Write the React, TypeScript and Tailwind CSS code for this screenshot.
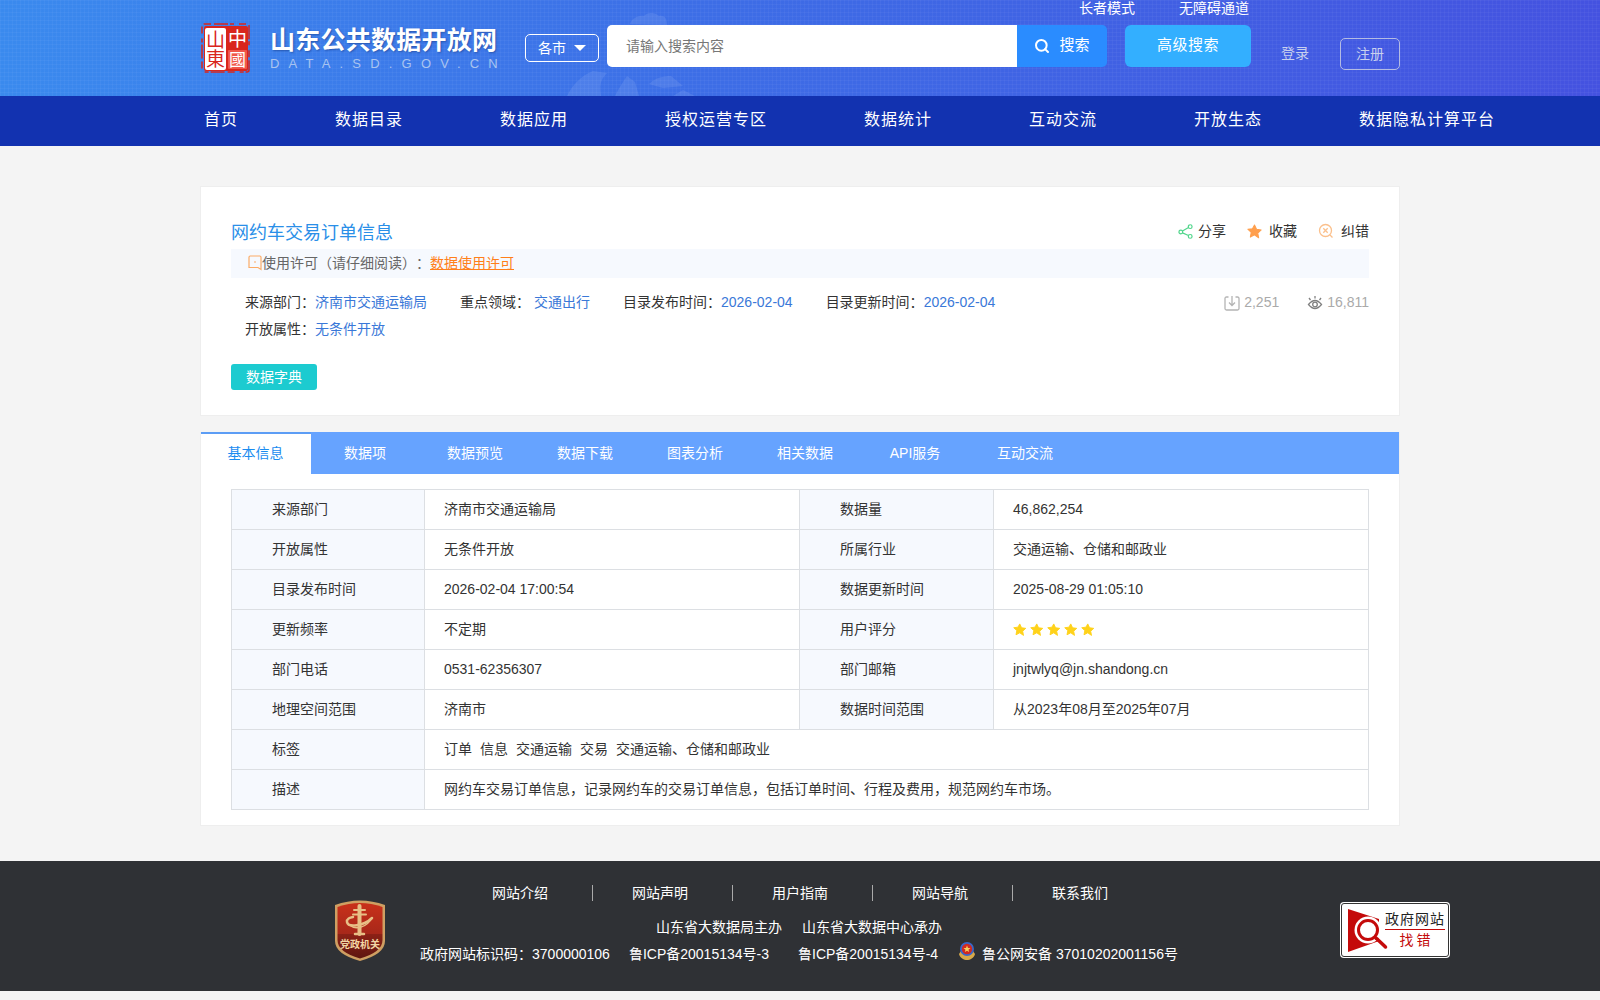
/**
 * 山东公共数据开放网 - dataset detail page
 */
import { Search } from 'lucide-react';

const NAV_ITEMS = ['首页', '数据目录', '数据应用', '授权运营专区', '数据统计', '互动交流', '开放生态', '数据隐私计算平台'];
const TABS = ['基本信息', '数据项', '数据预览', '数据下载', '图表分析', '相关数据', 'API服务', '互动交流'];
const FOOTER_LINKS = ['网站介绍', '网站声明', '用户指南', '网站导航', '联系我们'];

const ROWS: [string, string, string, string][] = [
  ['来源部门', '济南市交通运输局', '数据量', '46,862,254'],
  ['开放属性', '无条件开放', '所属行业', '交通运输、仓储和邮政业'],
  ['目录发布时间', '2026-02-04 17:00:54', '数据更新时间', '2025-08-29 01:05:10'],
  ['更新频率', '不定期', '用户评分', ''],
  ['部门电话', '0531-62356307', '部门邮箱', 'jnjtwlyq@jn.shandong.cn'],
  ['地理空间范围', '济南市', '数据时间范围', '从2023年08月至2025年07月'],
];

function Star({ className }: { className: string }) {
  return (
    <svg viewBox="1 1 22 22" className={className} fill="currentColor" stroke="currentColor" strokeWidth="1.5" strokeLinejoin="round">
      <path d="M12 2.500l3 6.300 6.800.9-5 4.700 1.300 6.800L12 17l-6.100 3.200 1.300-6.800-5-4.700 6.800-.9z" />
    </svg>
  );
}

function Seal() {
  return (
    <svg viewBox="0 0 52 52" className="w-[52px] h-[52px] shrink-0">
      <rect x="2" y="2" width="47" height="48" rx="2" fill="none" stroke="#d9261c" strokeWidth="1.500" strokeDasharray="7 3 14 2 4 5" />
      <rect x="4" y="4" width="44" height="45" rx="2" fill="#d9261c" />
      <rect x="5" y="6" width="21" height="42" rx="2" fill="#fff" />
      <rect x="28" y="28" width="19" height="19" rx="1" fill="#f0564a" />
      <text x="15.500" y="25" fontSize="19" textAnchor="middle" fill="#d9261c">山</text>
      <text x="15.500" y="44" fontSize="19" textAnchor="middle" fill="#d9261c">東</text>
      <text x="37.500" y="24" fontSize="19" textAnchor="middle" fill="#fff">中</text>
      <text x="37.500" y="44" fontSize="17" textAnchor="middle" fill="#fff">國</text>
    </svg>
  );
}

function PartyBadge() {
  return (
    <svg viewBox="0 0 52 63" className="w-[52px] h-[63px] shrink-0">
      <defs>
        <linearGradient id="shield" x1="0" y1="0" x2="0" y2="1">
          <stop offset="0" stopColor="#c9301a" />
          <stop offset="0.55" stopColor="#a8281a" />
          <stop offset="0.56" stopColor="#8c2116" />
          <stop offset="1" stopColor="#5e1610" />
        </linearGradient>
      </defs>
      <path d="M1 6Q26-3 51 6V42Q51 55 26 62Q1 55 1 42Z" fill="#cf9f62" />
      <path d="M3.500 8Q26 0 48.500 8V41Q48.500 53 26 59.500Q3.500 53 3.500 41Z" fill="url(#shield)" />
      <g fill="none" stroke="#e8bf86" strokeLinecap="round">
        <path d="M25.500 7V35" strokeWidth="4" />
        <path d="M20 11H31M19 15.500H32" strokeWidth="2" />
        <path d="M21 35H30" strokeWidth="2.500" />
        <path d="M38 19C30 27 14 29 13 23C12.500 20 16 18.500 19 18" strokeWidth="2.500" />
        <path d="M17 27C22 31 33 28 38 19" strokeWidth="1.500" />
      </g>
      <text x="26" y="49" fontSize="10" fontWeight="700" textAnchor="middle" fill="#f3d6a4">党政机关</text>
    </svg>
  );
}

function PoliceBadge() {
  return (
    <svg viewBox="0 0 20 20" className="w-[20px] h-[20px] shrink-0 -mt-[6px]">
      <path d="M2 13c1 4 5 6 8 6s7-2 8-6l-2-3H4z" fill="#d8a948" />
      <circle cx="10" cy="8" r="7" fill="#3a66c8" />
      <circle cx="10" cy="8" r="5.200" fill="#d02a20" />
      <path d="M10 4.500l1 2.400 2.500.2-2 1.600.7 2.400-2.200-1.400-2.200 1.400.7-2.400-2-1.600 2.500-.2z" fill="#f4d060" />
    </svg>
  );
}

function ErrorBadge() {
  return (
    <div className="w-[110px] h-[56px] bg-white rounded-[4px] p-[1px]">
      <div className="h-full bg-white rounded-[3px] border border-[#333] flex items-center pl-[5px]">
        <svg viewBox="0 0 42 46" className="w-[42px] h-[46px] shrink-0">
          <path d="M1 2L32 12V34L1 45Z" fill="#c40a0a" />
          <circle cx="21" cy="23" r="13.500" fill="#fff" />
          <circle cx="21" cy="23" r="9.500" fill="#fff" stroke="#c40a0a" strokeWidth="3" />
          <path d="M29 31l9.500 9" stroke="#c40a0a" strokeWidth="3.500" strokeLinecap="round" />
        </svg>
        <div className="flex flex-col items-center w-[60px] -ml-[4px] whitespace-nowrap">
          <span className="text-[14px] leading-[19px] text-[#222] tracking-[1px]">政府网站</span>
          <span className="w-full h-[1px] bg-[#c40a0a]" />
          <span className="text-[14px] leading-[21px] text-[#c40a0a] tracking-[3px] pl-[3px]">找错</span>
        </div>
      </div>
    </div>
  );
}

function Header() {
  return (
    <header className="h-[96px] bg-[linear-gradient(rgba(255,255,255,0.035)_1px,transparent_1px),linear-gradient(90deg,rgba(255,255,255,0.035)_1px,transparent_1px),linear-gradient(90deg,#3a8aee,#3d6de6_45%,#4452e0)] bg-[size:4px_4px,4px_4px,100%_100%] relative overflow-hidden">
      {/* faint mountain watermark around the search box */}
      <svg viewBox="0 0 150 96" className="absolute left-[565px] top-0 w-[150px] h-[96px] opacity-[0.1]" fill="#e4edff">
        <path d="M65 24c2-6 9-9 14-8 3-4 11-4 15 0 5-1 8 2 8 9zM2 96c6-12 14-20 26-25l14 2c-6 6-8 12-6 23zM50 96c4-8 8-14 12-20l8 6 4 14zM84 84c6-6 14-8 22-8l12 10-20 2zM108 96l10-6 12 6z" />
      </svg>
      <div className="relative w-[1200px] mx-auto flex h-full">
        <div className="absolute right-[151px] top-0 flex gap-[44px] text-sm leading-[16px] text-white">
          <span>长者模式</span>
          <span>无障碍通道</span>
        </div>

        <div className="flex items-center self-stretch">
          <Seal />
          <div className="ml-[18px] w-[235px] self-start pt-[25px]">
            <div className="text-[25px] leading-[30px] tracking-[0.250px] font-bold text-white whitespace-nowrap [text-shadow:1px_1px_2px_rgba(20,50,120,0.5)]">山东公共数据开放网</div>
            <div className="text-[13px] leading-[20px] -mt-[1px] tracking-[9.200px] text-[#a9c4f0] whitespace-nowrap">DATA.SD.GOV.CN</div>
          </div>
        </div>

        <div className="flex items-start pt-[25px] ml-[20px]">
          <div className="mt-[9px] w-[74px] h-[28px] border border-white rounded-[5px] flex items-center justify-center gap-[8px] text-sm text-white">
            各市
            <span className="w-0 h-0 border-x-[6px] border-x-transparent border-t-[6px] border-t-white" />
          </div>
          <div className="ml-[8px] w-[410px] h-[42px] bg-white rounded-l-[5px] pl-[19px] flex items-center text-sm text-[#777]">
            请输入搜索内容
          </div>
          <div className="w-[90px] h-[42px] bg-[#2a8cff] rounded-r-[5px] pb-[1px] flex items-center justify-center gap-[9px] text-[15px] text-white">
            <Search size={16} strokeWidth={3} />
            搜索
          </div>
          <div className="ml-[18px] w-[126px] h-[42px] bg-[#33afff] rounded-[6px] pb-[2px] flex items-center justify-center text-[15px] tracking-[0.500px] text-white">
            高级搜索
          </div>
          <div className="ml-[30px] mt-[18px] text-sm leading-[20px] text-[#c8d0ee]">登录</div>
          <div className="ml-[31px] mt-[13px] w-[60px] h-[32px] border border-[#b4bce4] rounded-[5px] flex items-center justify-center text-sm text-[#c8d0ee]">
            注册
          </div>
        </div>
      </div>
    </header>
  );
}

function NavBar() {
  return (
    <nav className="h-[50px] bg-[#1232b0]">
      <div className="w-[1200px] mx-auto flex items-center h-full gap-[97px] pl-[4px] pb-[2px] text-[16px] tracking-[1px] text-white whitespace-nowrap">
        {NAV_ITEMS.map((item) => (
          <span key={item}>{item}</span>
        ))}
      </div>
    </nav>
  );
}

function SummaryCard() {
  return (
    <section className="bg-white border border-[#eeeeee] px-[30px] pt-[34px] pb-[25px]">
      <div className="flex justify-between items-center h-[22px]">
        <h1 className="text-[18px] pt-[2px] text-[#2a8fe8]">网约车交易订单信息</h1>
        <div className="flex items-center pb-[2px] text-sm text-[#333]">
          <svg viewBox="0 0 16 16" className="w-[15px] h-[15px] mr-[5px]" fill="none" stroke="#52d68c" strokeWidth="1.300">
            <circle cx="3" cy="8.500" r="2" />
            <circle cx="13" cy="2.800" r="2" />
            <circle cx="13" cy="13.200" r="2" />
            <path d="M4.800 7.500l6.400-3.700M4.800 9.500l6.400 2.800" />
          </svg>
          <span>分享</span>
          <Star className="w-[15px] h-[15px] ml-[21px] mr-[7px] text-[#ff9f4d]" />
          <span>收藏</span>
          <svg viewBox="0 0 16 16" className="w-[16px] h-[16px] ml-[21px] mr-[7px]" fill="none" stroke="#fbc08c" strokeWidth="1.300">
            <circle cx="7.500" cy="7.500" r="6" />
            <path d="M5.300 5.300l4.400 4.400M9.700 5.300l-4.400 4.400M12 12l2.500 2.500" />
          </svg>
          <span>纠错</span>
        </div>
      </div>

      <div className="mt-[6px] h-[29px] bg-[#f6f9fe] flex items-center pl-[17px] pb-[1px] text-sm text-[#666] [text-spacing-trim:space-all]">
        <svg viewBox="0 0 14 16" className="w-[14px] h-[16px]" fill="none" stroke="#fbab66" strokeWidth="1.200">
          <path d="M1 2.200q0-1.200 1.200-1.200h9.600q1.200 0 1.200 1.200V14.500l-3-2H1z" />
          <path d="M6 7h2" />
        </svg>
        <span>使用许可（请仔细阅读）：</span>
        <span className="text-[#ff7f1a] underline">数据使用许可</span>
      </div>

      <div className="mt-[10px] flex justify-between items-center h-[28px] pl-[14px] text-sm text-[#333]">
        <div className="flex gap-[33px]">
          <span>来源部门：<span className="text-[#3a78d8]">济南市交通运输局</span></span>
          <span>重点领域：<span className="ml-[4px] text-[#3a78d8]">交通出行</span></span>
          <span>目录发布时间：<span className="text-[#3a78d8]">2026-02-04</span></span>
          <span>目录更新时间：<span className="text-[#3a78d8]">2026-02-04</span></span>
        </div>
        <div className="flex items-center text-[#aaaaaa]">
          <svg viewBox="0 0 16 16" className="w-[16px] h-[16px] mr-[4px] mt-[2px]" fill="none" stroke="#b4b4b4" strokeWidth="1.300">
            <path d="M4.500 2H2.500Q1 2 1 3.500v10Q1 15 2.500 15h11q1.500 0 1.500-1.500v-10Q15 2 13.500 2H11.500" />
            <path d="M8 1v9M5 7.500l3 3 3-3" />
          </svg>
          <span>2,251</span>
          <svg viewBox="0 0 16 16" className="w-[16px] h-[16px] ml-[28px] mr-[4px] mt-[2px]" fill="none" stroke="#808080" strokeWidth="1.300">
            <path d="M1.500 9.500Q8 1.500 14.500 9.500Q8 17.500 1.500 9.500Z" />
            <circle cx="8" cy="9.500" r="2.300" />
            <path d="M3.500 5L2 3M8 3.500V1M12.500 5L14 3" />
          </svg>
          <span>16,811</span>
        </div>
      </div>

      <div className="flex items-center h-[26px] pl-[14px] text-sm text-[#333]">
        <span>开放属性：<span className="text-[#3a78d8]">无条件开放</span></span>
      </div>

      <button className="mt-[22px] block w-[86px] h-[26px] bg-[#1ccbd0] rounded-[3px] text-sm text-white">数据字典</button>
    </section>
  );
}

function DetailPanel() {
  const labelCell = 'border border-[#dcdfe3] bg-[#f6f9fe] pl-[40px] pb-[1px] font-normal text-left';
  const valueCell = 'border border-[#dcdfe3] pl-[19px] pb-[1px]';

  return (
    <section className="mt-[16px] bg-white border-x border-b border-[#eeeeee] pb-[15px]">
      <div className="flex h-[42px] bg-[#66a3ff] text-sm text-white">
        {TABS.map((tab, i) =>
          i === 0 ? (
            <span key={tab} className="w-[110px] flex items-center justify-center bg-white border-t-2 border-[#5c9df5] pb-[2px] pr-[1px] text-[#1a8cf0]">{tab}</span>
          ) : (
            <span key={tab} className="w-[110px] flex items-center justify-center pr-[2px]">{tab}</span>
          ),
        )}
      </div>

      <div className="px-[30px] pt-[15px]">
        <table className="w-[1137px] table-fixed border-collapse text-sm text-[#333]">
          <colgroup>
            <col className="w-[193px]" />
            <col className="w-[375px]" />
            <col className="w-[194px]" />
            <col className="w-[375px]" />
          </colgroup>
          <tbody>
            {ROWS.map(([l1, v1, l2, v2]) => (
              <tr key={l1} className="h-[40px]">
                <th className={labelCell}>{l1}</th>
                <td className={valueCell}>{v1}</td>
                <th className={labelCell}>{l2}</th>
                <td className={valueCell}>
                  {v2 || (
                    <div className="flex gap-[3.500px] mt-[1px] text-[#ffd21a]">
                      {[0, 1, 2, 3, 4].map((n) => (
                        <Star key={n} className="w-[13.500px] h-[13.500px]" />
                      ))}
                    </div>
                  )}
                </td>
              </tr>
            ))}
            <tr className="h-[40px]">
              <th className={labelCell}>标签</th>
              <td className={valueCell} colSpan={3}>
                <div className="flex gap-[8px]">
                  <span>订单</span>
                  <span>信息</span>
                  <span>交通运输</span>
                  <span>交易</span>
                  <span>交通运输、仓储和邮政业</span>
                </div>
              </td>
            </tr>
            <tr className="h-[40px]">
              <th className={labelCell}>描述</th>
              <td className={valueCell} colSpan={3}>网约车交易订单信息，记录网约车的交易订单信息，包括订单时间、行程及费用，规范网约车市场。</td>
            </tr>
          </tbody>
        </table>
      </div>
    </section>
  );
}

function Footer() {
  return (
    <footer className="mt-[35px] h-[130px] bg-[#2f3135] flex items-start pl-[334px] text-sm text-white">
      <div className="mt-[38px]">
        <PartyBadge />
      </div>
      <div className="w-[826px] flex flex-col items-center pt-[24px]">
        <div className="flex h-[16px] items-center ml-[8px]">
          {FOOTER_LINKS.map((link, i) =>
            i < FOOTER_LINKS.length - 1 ? (
              <span key={link} className="w-[140px] pl-[39px] leading-[16px] border-r border-[#aaaaaa]">{link}</span>
            ) : (
              <span key={link} className="w-[140px] pl-[39px] leading-[16px]">{link}</span>
            ),
          )}
        </div>
        <div className="mt-[16px] flex gap-[20px] leading-[20px]">
          <span>山东省大数据局主办</span>
          <span>山东省大数据中心承办</span>
        </div>
        <div className="mt-[7px] flex items-center leading-[20px] whitespace-nowrap">
          <span>政府网站标识码：3700000106</span>
          <span className="ml-[19px]">鲁ICP备20015134号-3</span>
          <span className="ml-[29px]">鲁ICP备20015134号-4</span>
          <span className="ml-[19px] mr-[5px]"><PoliceBadge /></span>
          <span>鲁公网安备 37010202001156号</span>
        </div>
      </div>
      <div className="ml-[128px] mt-[41px]">
        <ErrorBadge />
      </div>
    </footer>
  );
}

export default function App() {
  return (
    <div className="min-h-screen bg-[#f4f4f4] font-['Liberation_Sans','Noto_Sans_CJK_SC',sans-serif]">
      <Header />
      <NavBar />
      <main className="w-[1200px] mx-auto pt-[40px]">
        <SummaryCard />
        <DetailPanel />
      </main>
      <Footer />
    </div>
  );
}
